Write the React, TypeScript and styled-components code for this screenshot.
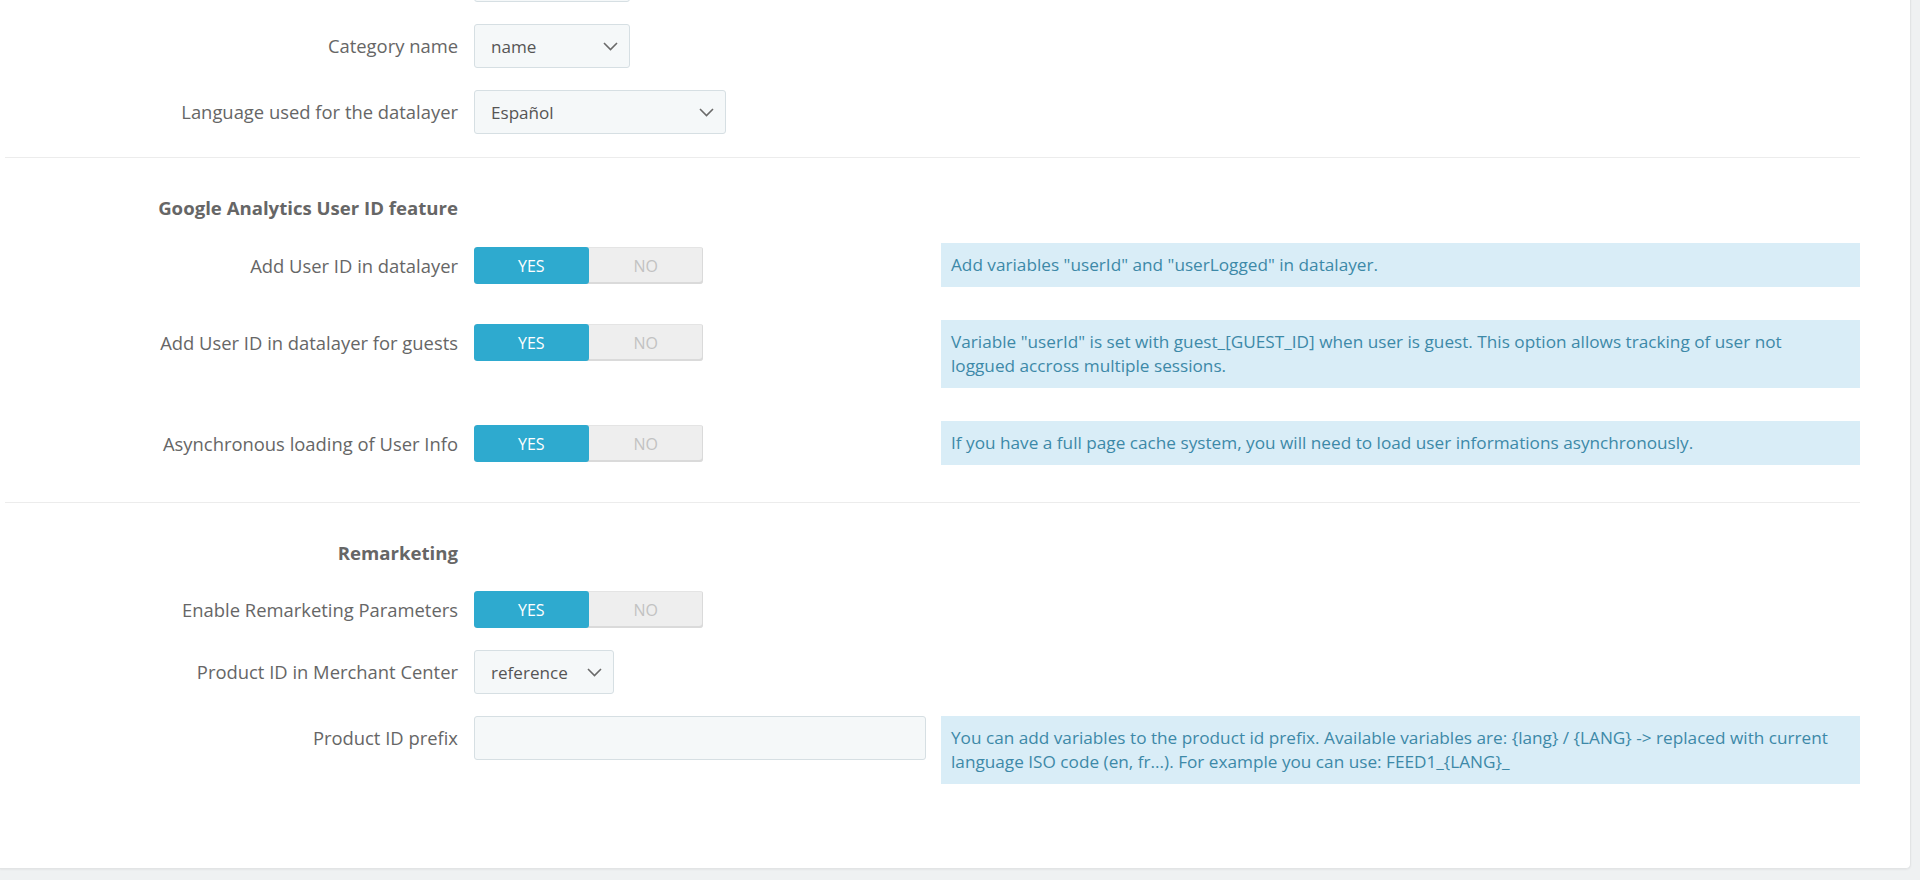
import React from "react";
import styled, { createGlobalStyle } from "styled-components";

const GlobalStyle = createGlobalStyle`
  html, body {
    margin: 0;
    padding: 0;
    background: #eff1f2;
    font-family: "Open Sans", "Noto Sans", sans-serif;
    color: #666;
  }
  * { box-sizing: border-box; }
`;

const Page = styled.div`
  width: 1920px;
  height: 880px;
  overflow: hidden;
  padding: 0 9px 13px 0;
`;

const Panel = styled.div`
  margin-top: -62px;
  background: #fff;
  border: 1px solid #e2e4e5;
  border-top: none;
  border-left: none;
  border-radius: 0 0 5px 0;
  box-shadow: 0 1px 2px rgba(0, 0, 0, 0.05);
  padding: 20px 50px 73px 5px;
`;

const Row = styled.div`
  display: flex;
  align-items: flex-start;
  margin-bottom: 22px;
  &:last-child {
    margin-bottom: 0;
  }
`;

const Field = styled.div<{ $offset: number }>`
  display: flex;
  align-items: center;
  gap: 16px;
  width: 921px;
  flex: none;
  padding-top: ${(p) => p.$offset}px;
`;

const Label = styled.label`
  width: 453px;
  flex: none;
  text-align: right;
  font-size: 18.4px;
  line-height: 24px;
  color: #666;
`;

const Control = styled.div`
  width: 452px;
  flex: none;
  display: flex;
`;

const Heading = styled.div`
  width: 453px;
  text-align: right;
  font-size: 18.6px;
  line-height: 24px;
  font-weight: 700;
  color: #666;
  margin: 38px 0 23px;
`;

const Divider = styled.hr<{ $top: number }>`
  border: none;
  border-top: 1px solid #ececec;
  margin: ${(p) => p.$top}px 0 0;
  height: 0;
`;

const Alert = styled.div`
  margin-left: 15px;
  flex: 1;
  background: #d9edf7;
  color: #3d89a8;
  font-size: 17.2px;
  line-height: 24px;
  padding: 10px 25px 10px 10px;
  margin-bottom: 11px;
`;

const SelectBox = styled.div<{ $w: number }>`
  width: ${(p) => p.$w}px;
  height: 44px;
  display: flex;
  align-items: center;
  justify-content: space-between;
  padding: 0 11px 0 16px;
  background: #f5f8f9;
  border: 1px solid #d6dfe3;
  border-radius: 3px;
  font-size: 17.1px;
  color: #555;
`;

const TextInput = styled.input`
  width: 452px;
  height: 44px;
  background: #f5f8f9;
  border: 1px solid #d6dfe3;
  border-radius: 3px;
  font-family: inherit;
  font-size: 17.1px;
  padding: 0 16px;
  outline: none;
`;

const Switch = styled.div`
  display: flex;
  width: 229px;
  height: 37px;
  border-radius: 3px;
  overflow: hidden;
  background: #eeeeee;
  box-shadow: inset -1px -2px 0 #dadada, inset 0 1px 0 #e4e4e4;
`;

const SwitchOption = styled.span<{ $on?: boolean }>`
  flex: 1;
  display: flex;
  align-items: center;
  justify-content: center;
  font-size: 16px;
  text-transform: uppercase;
  color: ${(p) => (p.$on ? "#fff" : "#c2c2c2")};
  background: ${(p) => (p.$on ? "#2eaacf" : "transparent")};
  border-radius: ${(p) => (p.$on ? "3px" : "0")};
`;

const Chevron = () => (
  <svg width="15" height="9" viewBox="0 0 15 9" fill="none">
    <path d="M1 1l6.5 6.5L14 1" stroke="#6a6a6a" strokeWidth="1.6" />
  </svg>
);

const Select = ({ w, value }: { w: number; value: string }) => (
  <SelectBox $w={w}>
    <span>{value}</span>
    <Chevron />
  </SelectBox>
);

const Toggle = () => (
  <Switch>
    <SwitchOption $on>Yes</SwitchOption>
    <SwitchOption>No</SwitchOption>
  </Switch>
);

type FormRowProps = {
  label: string;
  children: React.ReactNode;
  help?: React.ReactNode;
  offset?: number;
};

const FormRow = ({ label, children, help, offset = 0 }: FormRowProps) => (
  <Row>
    <Field $offset={offset}>
      <Label>{label}</Label>
      <Control>{children}</Control>
    </Field>
    {help && <Alert>{help}</Alert>}
  </Row>
);

export default function App() {
  return (
    <>
      <GlobalStyle />
      <Page>
        <Panel>
          <FormRow label="">
            <Select w={156} value="" />
          </FormRow>
          <FormRow label="Category name">
            <Select w={156} value="name" />
          </FormRow>
          <FormRow label="Language used for the datalayer">
            <Select w={252} value="Español" />
          </FormRow>

          <Divider $top={23} />
          <Heading>Google Analytics User ID feature</Heading>
          <FormRow
            offset={4}
            label="Add User ID in datalayer"
            help={<>Add variables "userId" and "userLogged" in datalayer.</>}
          >
            <Toggle />
          </FormRow>
          <FormRow
            offset={4}
            label="Add User ID in datalayer for guests"
            help={
              <>
                Variable "userId" is set with guest_[GUEST_ID] when user is guest. This option allows
                tracking of user not loggued accross multiple sessions.
              </>
            }
          >
            <Toggle />
          </FormRow>
          <FormRow
            offset={4}
            label="Asynchronous loading of User Info"
            help={<>If you have a full page cache system, you will need to load user informations asynchronously.</>}
          >
            <Toggle />
          </FormRow>

          <Divider $top={26} />
          <Heading>Remarketing</Heading>
          <FormRow offset={3} label="Enable Remarketing Parameters">
            <Toggle />
          </FormRow>
          <FormRow label="Product ID in Merchant Center">
            <Select w={140} value="reference" />
          </FormRow>
          <FormRow
            label="Product ID prefix"
            help={
              <>
                You can add variables to the product id prefix. Available variables are: {"{lang}"} / {"{LANG}"} -&gt;
                replaced with current language ISO code (en, fr...). For example you can use: FEED1_{"{LANG}"}_
              </>
            }
          >
            <TextInput />
          </FormRow>
        </Panel>
      </Page>
    </>
  );
}
